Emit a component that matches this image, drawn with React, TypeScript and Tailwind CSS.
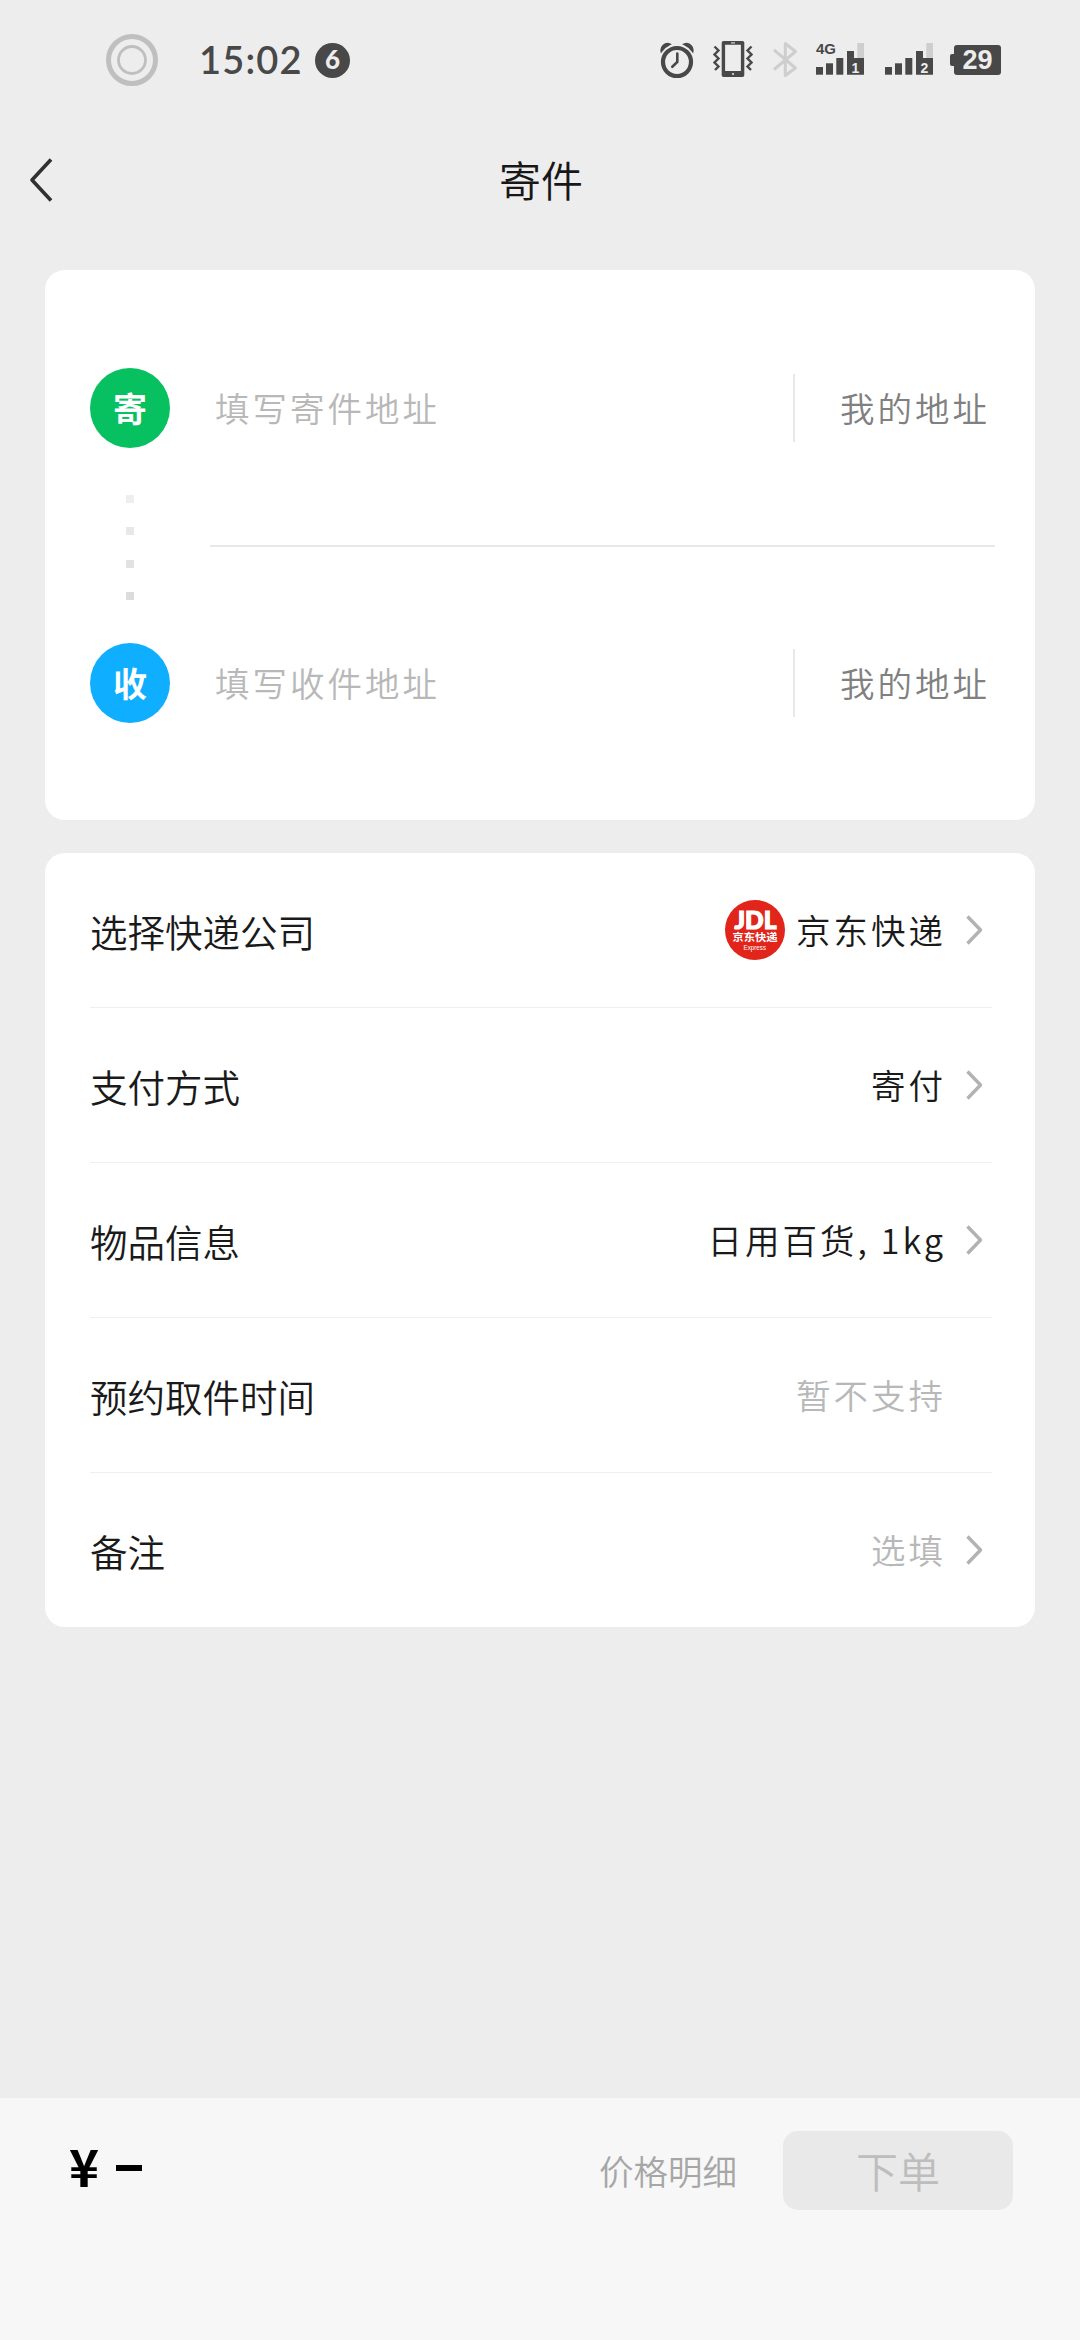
import React from "react";

type RowProps = {
    label: string;
    value: string;
    muted?: boolean;
    arrow?: boolean;
    logo?: boolean;
    last?: boolean;
};

const rows: RowProps[] = [
    { label: "选择快递公司", value: "京东快递", arrow: true, logo: true },
    { label: "支付方式", value: "寄付", arrow: true },
    { label: "物品信息", value: "日用百货, 1kg", arrow: true },
    { label: "预约取件时间", value: "暂不支持", muted: true },
    { label: "备注", value: "选填", muted: true, arrow: true, last: true },
];

function AlarmIcon() {
    return (
        <svg width="34" height="40" viewBox="0 0 34 40" fill="none" stroke="#484848">
            <circle cx="17" cy="22" r="14" strokeWidth="4.2" />
            <path d="M17.3 13.5v8.5l-5 4.8" strokeWidth="2.6" strokeLinecap="round" />
            <path d="M1.3 11.5C.3 7 5 2 10 4.200 6.5 5.8 3.5 8.2 1.3 11.500zM32.7 11.500C33.7 7 29 2 24 4.200 27.500 5.8 30.5 8.2 32.7 11.500z" fill="#484848" strokeWidth="1.6" />
        </svg>
    );
}

function VibrateIcon() {
    return (
        <svg width="40" height="40" viewBox="0 0 40 40" fill="none">
            <path d="M10.5 1h19a1.8 1.8 0 0 1 1.8 1.8v32.4a1.8 1.8 0 0 1-1.8 1.8h-19a1.8 1.8 0 0 1-1.8-1.8V2.8A1.8 1.8 0 0 1 10.5 1zM12.1 4.7V31h15.8V4.7z" fill="#484848" fillRule="evenodd" />
            <path d="M18 2.9h4" stroke="#ededed" strokeWidth="1" />
            <circle cx="20" cy="34" r="1" fill="#ededed" />
            <path d="M1.5 6.5l4 4-4 4 4 4-4 4 4 4-3.5 3.5M38.5 6.5l-4 4 4 4-4 4 4 4-4 4 3.5 3.5" stroke="#484848" strokeWidth="2.4" />
        </svg>
    );
}

function BluetoothIcon() {
    return (
        <svg width="25" height="40" viewBox="0 0 25 40" fill="none" stroke="#cecece" strokeWidth="3">
            <path d="M1 9.8L22.5 28 12.3 35.5v-32l10.2 8L1 29.5" strokeLinejoin="round" />
        </svg>
    );
}

function SignalIcon({ sim, network }: { sim: string; network?: string }) {
    return (
        <svg width="48" height="40" viewBox="0 0 48 40" fill="#484848">
            <rect x="0" y="27" width="7" height="7.7" />
            <rect x="10" y="23.3" width="7" height="11.4" />
            <rect x="20.3" y="18" width="7" height="16.7" />
            <path d="M31 11h7v7h10v16.7H31z" />
            <rect x="41.3" y="3" width="6.7" height="15" fill="#cecece" />
            <text x="35.4" y="32.5" className="font-['Liberation_Sans'] text-[14px] font-bold" fill="#ededed">{sim}</text>
            {network && (
                <text x="0" y="13.7" className="font-['Liberation_Sans'] text-[15px] font-bold">{network}</text>
            )}
        </svg>
    );
}

function StatusBar() {
    return (
        <div className="flex h-[120px] items-center pl-[106px] pr-[79px] text-[#484848]">
            <svg width="52" height="52" viewBox="0 0 52 52" fill="none" stroke="#bfbfbf">
                <circle cx="26" cy="26" r="23.5" strokeWidth="5" />
                <circle cx="26" cy="26" r="13.5" strokeWidth="2.8" />
            </svg>
            <span className="mb-[2px] ml-[41px] w-[101px] font-['Lato',sans-serif] text-[38px] font-semibold leading-none tracking-[1.2px]">15:02</span>
            <span className="ml-[15px] flex size-[35px] items-center justify-center rounded-full bg-[#484848] pb-[2px] font-['Lato',sans-serif] text-[26px] font-black leading-none text-[#ededed]">6</span>
            <div className="ml-auto flex items-center">
                <AlarmIcon />
                <span className="ml-[19px]"><VibrateIcon /></span>
                <span className="ml-[20px]"><BluetoothIcon /></span>
                <span className="ml-[18px]"><SignalIcon sim="1" network="4G" /></span>
                <span className="ml-[21px]"><SignalIcon sim="2" /></span>
                <div className="ml-[17px] flex items-center">
                    <span className="h-3 w-1 rounded-l-xs bg-[#484848]" />
                    <span className="flex h-[30px] w-[47px] items-center justify-center rounded-[3px] bg-[#484848] font-['Liberation_Sans',sans-serif] text-[27px] font-bold leading-none text-[#ededed]">29</span>
                </div>
            </div>
        </div>
    );
}

function JdlLogo() {
    return (
        <svg width="60" height="60" viewBox="0 0 60 60" fill="#fff">
            <circle cx="30" cy="30" r="30" fill="#e1251b" />
            <text x="9.5" y="28.5" textLength="42" lengthAdjust="spacingAndGlyphs" stroke="#fff" strokeWidth="1.2" className="font-['Lato'] text-[25px] font-black">JDL</text>
            <text x="7.5" y="41" textLength="45" lengthAdjust="spacingAndGlyphs" className="font-['Noto_Sans_CJK_SC'] text-[10px] font-bold">京东快递</text>
            <text x="18.5" y="49.5" textLength="22.5" lengthAdjust="spacingAndGlyphs" className="font-['Liberation_Sans'] text-[6.5px]">Express</text>
        </svg>
    );
}

function AddressRow({ tag, color, placeholder }: { tag: string; color: string; placeholder: string }) {
    return (
        <div className="flex h-20 items-center">
            <span className={`flex size-20 items-center justify-center rounded-full pb-px text-[34px] font-bold leading-none text-white ${color}`}>{tag}</span>
            <span className="mb-px ml-[45px] flex-1 text-[34.5px] leading-none tracking-[3px] text-[#b8b8b8]">{placeholder}</span>
            <span className="h-[68px] w-0.5 bg-[#e8e8e8]" />
            <span className="mb-px ml-[45px] w-[150px] whitespace-nowrap text-[34.5px] leading-none tracking-[3px] text-[#808080]">我的地址</span>
        </div>
    );
}

function InfoRow({ label, value, muted, arrow, logo, last }: RowProps) {
    return (
        <div className={`flex items-center ${last ? "h-[154px]" : "h-[155px] border-b border-[#efefef]"}`}>
            <span className="flex-1 pt-[2px] text-[37.5px] leading-none text-[#1a1a1a]">{label}</span>
            {logo && <span className="mr-[11px]"><JdlLogo /></span>}
            <span className={`mb-px text-[34.5px] leading-none tracking-[3px] ${muted ? "text-[#b8b8b8]" : "text-[#1a1a1a]"}`}>{value}</span>
            <span className="mb-px ml-[18px] mr-[8px] w-5">
                {arrow && (
                    <svg width="20" height="32" viewBox="0 0 20 32" fill="none" stroke="#b2b2b2" strokeWidth="3.4">
                        <path d="M3.5 2.5L16.5 16 3.5 29.5" strokeLinejoin="round" />
                    </svg>
                )}
            </span>
        </div>
    );
}

export default function App() {
    return (
        <main className="flex h-[2340px] w-[1080px] flex-col overflow-hidden bg-[#ededed] font-['Noto_Sans_CJK_SC',sans-serif] font-[350]">
            <StatusBar />

            <header className="grid h-[150px] grid-cols-[100px_1fr_98px] items-start">
                <svg className="ml-[28px] mt-[38px]" width="26" height="44" viewBox="0 0 26 44" fill="none" stroke="#303030" strokeWidth="3.6">
                    <path d="M23 1.5L4 22l19 20.5" strokeLinejoin="round" />
                </svg>
                <h1 className="mt-[38px] text-center text-[42px] leading-none text-[#171717]">寄件</h1>
            </header>

            <section className="mx-[45px] h-[550px] rounded-[20px] bg-white px-[45px] pt-[98px]">
                <AddressRow tag="寄" color="bg-[#07c160]" placeholder="填写寄件地址" />
                <div className="flex h-[195px]">
                    <div className="flex w-20 flex-col items-center gap-[24.5px] pt-[46.5px]">
                        <span className="size-2 bg-[#eeeeee]" />
                        <span className="size-2 bg-[#e8e8e8]" />
                        <span className="size-2 bg-[#e2e2e2]" />
                        <span className="size-2 bg-[#dcdcdc]" />
                    </div>
                    <div className="ml-[40px] mr-[-5px] mt-[97px] h-0.5 flex-1 bg-[#e8e8e8]" />
                </div>
                <AddressRow tag="收" color="bg-[#10aeff]" placeholder="填写收件地址" />
            </section>

            <section className="mx-[45px] mt-[33px] rounded-[20px] bg-white pl-[45px] pr-[43px]">
                {rows.map((row) => (
                    <InfoRow key={row.label} {...row} />
                ))}
            </section>

            <footer className="mt-auto flex h-[242px] items-start bg-[#f7f7f7] pl-[69px] pr-[67px] pt-[33px]">
                <div className="flex h-[74px] flex-1 items-center text-[51px] font-bold leading-none text-black">
                    <span className="mb-[5px]">¥</span>
                    <span className="ml-[17px] h-1.5 w-[26px] bg-black" />
                </div>
                <span className="mr-[46px] mt-[22px] text-[34.5px] leading-none text-[#a6a6a6]">价格明细</span>
                <button className="h-[79px] w-[230px] rounded-[15px] bg-[#e9e9e9] pb-[2px] text-[42px] leading-none text-[#bdbdbd]">下单</button>
            </footer>
        </main>
    );
}
